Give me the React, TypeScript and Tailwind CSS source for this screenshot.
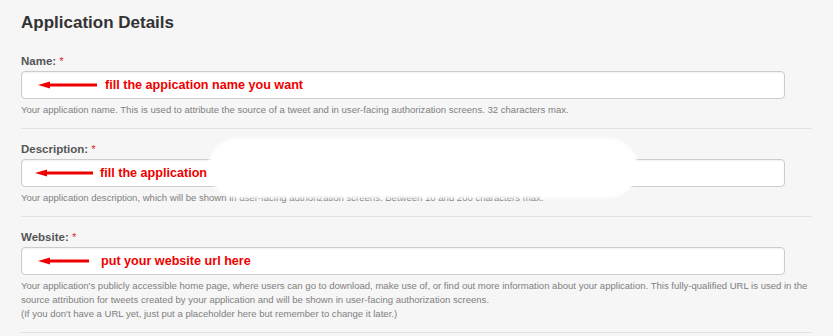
import React from 'react';

interface Field {
  label: string;
  note: string;
  arrowLeft: number;
  arrowWidth: number;
  gap: number;
  help: string[];
}

const fields: Field[] = [
  {
    label: 'Name:',
    note: 'fill the appication name you want',
    arrowLeft: 16,
    arrowWidth: 59,
    gap: 8,
    help: [
      'Your application name. This is used to attribute the source of a tweet and in user-facing authorization screens. 32 characters max.',
    ],
  },
  {
    label: 'Description:',
    note: 'fill the application',
    arrowLeft: 13,
    arrowWidth: 58,
    gap: 7,
    help: [
      'Your application description, which will be shown in user-facing authorization screens. Between 10 and 200 characters max.',
    ],
  },
  {
    label: 'Website:',
    note: 'put your website url here',
    arrowLeft: 16,
    arrowWidth: 51,
    gap: 12,
    help: [
      "Your application's publicly accessible home page, where users can go to download, make use of, or find out more information about your application. This fully-qualified URL is used in the",
      'source attribution for tweets created by your application and will be shown in user-facing authorization screens.',
      "(If you don't have a URL yet, just put a placeholder here but remember to change it later.)",
    ],
  },
];

const Arrow: React.FC<{ width: number }> = ({ width }) => (
  <svg width={width} height={8} viewBox={`0 0 ${width} 8`} className="shrink-0">
    <polygon points="0,4 12,0.5 12,7.5" fill="#ee0000" />
    <rect x={10} y={2.5} width={width - 10} height={3} fill="#ee0000" />
  </svg>
);

const App: React.FC = () => {
  return (
    <div className="relative w-[833px] h-[336px] overflow-hidden bg-[#f6f6f6] pl-[21px] pt-[12px] font-['Liberation_Sans',Arial,sans-serif]">
      <h1 className="text-[17px] leading-[22px] font-bold text-[#333]">Application Details</h1>

      <div className="mt-[20px] w-[791px]">
        {fields.map((field, index) => (
          <div key={field.label} className={index > 0 ? 'pt-[13px]' : ''}>
            <label className="block text-[11.5px] leading-[14px] font-bold text-[#555]">
              {field.label} <span className="text-[#d33] font-normal">*</span>
            </label>
            <div
              className="mt-[3px] flex h-[28px] w-[764px] items-center rounded-[4px] border border-[#ccc] bg-white shadow-[inset_0_1px_2px_rgba(0,0,0,0.06)]"
              style={{ paddingLeft: field.arrowLeft }}
            >
              <Arrow width={field.arrowWidth} />
              <span
                className="text-[12.6px] font-bold text-[#ee0000] whitespace-nowrap"
                style={{ marginLeft: field.gap }}
              >
                {field.note}
              </span>
            </div>
            <p className="mt-[4px] text-[9.55px] leading-[14px] text-[#808080] whitespace-nowrap">
              {field.help.map((line, i) => (
                <React.Fragment key={i}>
                  {i > 0 && <br />}
                  {line}
                </React.Fragment>
              ))}
            </p>
            <div className="mt-[11px] h-px bg-[#e2e2e2]" />
          </div>
        ))}
      </div>

      {/* white redaction blob over the description field */}
      <div className="absolute left-[208px] top-[138px] h-[60px] w-[430px] rounded-[30px] bg-white blur-[1.5px]" />
    </div>
  );
};

export default App;
